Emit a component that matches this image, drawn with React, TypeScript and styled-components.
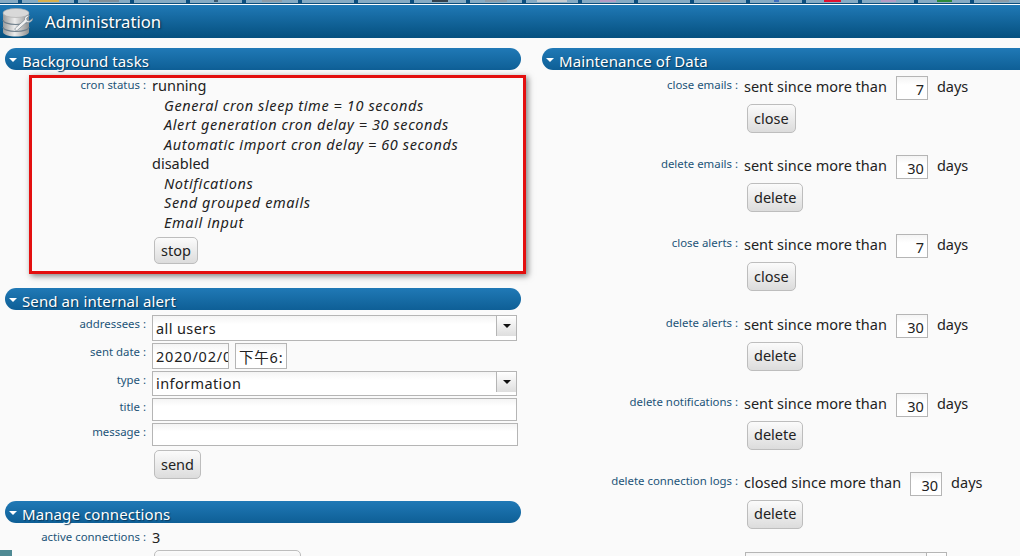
import React, { FunctionComponent, ReactNode } from 'react'
import styled, { createGlobalStyle } from 'styled-components'

const UI_FONT = '"Noto Sans", "Noto Sans CJK TC", sans-serif'

const TAB_TIPS: Array<{ color?: string; width?: number }> = [
  {},
  { color: '#d9b04e', width: 21 },
  { color: '#7f8f9b', width: 30 },
  {},
  { color: '#3c5a70', width: 4 },
  { color: '#8d9ca8', width: 20 },
  {},
  {},
  { color: '#33414d', width: 16 },
  { color: '#8d9ca8', width: 22 },
  { color: '#c5cbd0', width: 30 },
  { color: '#b49bc4', width: 16 },
  {},
  { color: '#9a9a9a', width: 20 },
  { color: '#3f6fc0', width: 5 },
  { color: '#e0102f', width: 17 },
  { color: '#b49bc4', width: 15 },
  { color: '#2d8a3a', width: 15 },
  { color: '#8d9ca8', width: 18 }
]

const MAINTENANCE = [
  { label: 'close emails', prefix: 'sent since more than', days: 7, action: 'close' },
  { label: 'delete emails', prefix: 'sent since more than', days: 30, action: 'delete' },
  { label: 'close alerts', prefix: 'sent since more than', days: 7, action: 'close' },
  { label: 'delete alerts', prefix: 'sent since more than', days: 30, action: 'delete' },
  { label: 'delete notifications', prefix: 'sent since more than', days: 30, action: 'delete' },
  { label: 'delete connection logs', prefix: 'closed since more than', days: 30, action: 'delete' }
]

const Section: FunctionComponent<{ title: string; children: ReactNode }> = ({ title, children }) => {
  return (
    <section>
      <SectionHeader>
        <Caret />
        <SectionTitle>{title}</SectionTitle>
      </SectionHeader>
      {children}
    </section>
  )
}

const DatabaseIcon: FunctionComponent = () => (
  <svg width="32" height="29" viewBox="0 0 32 29">
    <defs>
      <linearGradient id="dbBody" x1="0" x2="1" y1="0" y2="0">
        <stop offset="0" stopColor="#9b9b9b" />
        <stop offset="0.45" stopColor="#ececec" />
        <stop offset="1" stopColor="#8f8f8f" />
      </linearGradient>
    </defs>
    <path d="M1 5v19c0 2.500 5.500 4.500 13 4.500s13-2 13-4.500V5z" fill="url(#dbBody)" />
    <ellipse cx="14" cy="5" rx="13" ry="4.500" fill="#d9d9d9" stroke="#a8a8a8" strokeWidth="0.6" />
    <path d="M1 12c0 2.500 5.500 4.500 13 4.500S27 14.500 27 12" fill="none" stroke="#6f7f8c" strokeWidth="1.2" />
    <path d="M1 19c0 2.500 5.500 4.500 13 4.500S27 21.500 27 19" fill="none" stroke="#6f7f8c" strokeWidth="1.2" />
    <path
      d="M30.500 10.500l-3 2.600-2.300-.6-.6-2.200 2.900-2.600c-2.600-.8-5.500 1.200-5 4.300L13.500 20c-1.500 1.300.4 3.600 2 2.200l9-8c2.800 1 6.300-1 6-3.700z"
      fill="#f2f2f2"
      stroke="#7d8a94"
      strokeWidth="0.7"
    />
  </svg>
)

const ComboBox: FunctionComponent<{ value?: string; width?: number; height: number }> = ({ value, width, height }) => (
  <Combo $width={width} $height={height}>
    <ComboText $height={height}>{value}</ComboText>
    <ComboArrow>
      <ArrowGlyph />
    </ComboArrow>
  </Combo>
)

export default function App() {
  return (
    <Page>
      <GlobalStyle />
      <TabStrip>
        {TAB_TIPS.map((tip, index) => (
          <Tab key={index}>{tip.color && <TabTip $color={tip.color} $width={tip.width} />}</Tab>
        ))}
      </TabStrip>
      <TitleBar>
        <DatabaseIcon />
        <PageTitle>Administration</PageTitle>
      </TitleBar>
      <Columns>
        <LeftColumn>
          <Section title="Background tasks">
            <CronBody>
              <FormRow>
                <FieldLabel>cron status :</FieldLabel>
                <div>
                  <TextLine>running</TextLine>
                  <Detail>General cron sleep time = 10 seconds</Detail>
                  <Detail>Alert generation cron delay = 30 seconds</Detail>
                  <Detail>Automatic import cron delay = 60 seconds</Detail>
                  <TextLine>disabled</TextLine>
                  <Detail>Notifications</Detail>
                  <Detail>Send grouped emails</Detail>
                  <Detail>Email input</Detail>
                  <Button $height={27} $top={5} $left={2}>
                    stop
                  </Button>
                </div>
              </FormRow>
            </CronBody>
          </Section>

          <Section title="Send an internal alert">
            <AlertBody>
              <FormRow>
                <FieldLabel>addressees :</FieldLabel>
                <ComboBox value="all users" width={365} height={26} />
              </FormRow>
              <FormRow>
                <FieldLabel>sent date :</FieldLabel>
                <DateFields>
                  <DateInput $width={77} readOnly value="2020/02/06" />
                  <DateInput $width={52} readOnly value="下午6:" />
                </DateFields>
              </FormRow>
              <FormRow>
                <FieldLabel>type :</FieldLabel>
                <ComboBox value="information" width={365} height={25} />
              </FormRow>
              <FormRow>
                <FieldLabel>title :</FieldLabel>
                <TextBox $width={365} $height={23} />
              </FormRow>
              <FormRow>
                <FieldLabel>message :</FieldLabel>
                <TextBox $width={366} $height={23} />
              </FormRow>
              <FormRow>
                <span />
                <Button $height={29} $top={2} $left={2}>
                  send
                </Button>
              </FormRow>
            </AlertBody>
          </Section>

          <Section title="Manage connections">
            <ConnectionsBody>
              <FormRow>
                <FieldLabel>active connections :</FieldLabel>
                <TextLine>3</TextLine>
              </FormRow>
              <FormRow>
                <span />
                <WideButton />
              </FormRow>
            </ConnectionsBody>
          </Section>
        </LeftColumn>

        <RightColumn>
          <Section title="Maintenance of Data">
            <MaintenanceBody>
              {MAINTENANCE.map(row => (
                <MaintenanceRow key={row.label}>
                  <FieldLabel>{row.label} :</FieldLabel>
                  <div>
                    <DaysLine>
                      <TextLine>{row.prefix}</TextLine>
                      <DaysInput>{row.days}</DaysInput>
                      <TextLine>days</TextLine>
                    </DaysLine>
                    <Button $height={29} $top={4} $left={3}>
                      {row.action}
                    </Button>
                  </div>
                </MaintenanceRow>
              ))}
              <LastRow>
                <span />
                <ComboBox width={202} height={25} />
              </LastRow>
            </MaintenanceBody>
          </Section>
        </RightColumn>
      </Columns>
      <HighlightFrame />
      <CornerTab />
    </Page>
  )
}

const GlobalStyle = createGlobalStyle`
  html, body {
    margin: 0;
    padding: 0;
    background: #fafafa;
  }
`

const Page = styled.div`
  position: relative;
  width: 1020px;
  height: 556px;
  overflow: hidden;
  background: #fafafa;
  font-family: ${UI_FONT};
  font-size: 14.5px;
  color: #222;
`

const TabStrip = styled.div`
  display: flex;
  gap: 4px;
  height: 3px;
  margin-left: -34px;
  background: #0d4f7f;
  border-bottom: 1px solid #0d4f7f;
  box-shadow: 0 1px 0 #fff;
  margin-bottom: 1px;
`

const Tab = styled.div`
  flex: 0 0 52px;
  display: flex;
  justify-content: center;
  background: #86abc4;
`

const TabTip = styled.div<{ $color: string; $width?: number }>`
  width: ${(props): number => props.$width ?? 0}px;
  height: 2px;
  background: ${(props): string => props.$color};
`

const TitleBar = styled.header`
  display: flex;
  align-items: center;
  gap: 11px;
  height: 33px;
  padding-left: 2px;
  background: linear-gradient(#2079b6, #05507f);

  svg {
    flex: none;
    align-self: flex-start;
    margin-top: 3px;
  }
`

const PageTitle = styled.h1`
  margin: 0;
  font-size: 16.7px;
  font-weight: 400;
  color: #fff;
  text-shadow: 1px 1px 2px #0a2a40;
`

const Columns = styled.div`
  display: flex;
  gap: 21px;
  padding: 10px 0 0 5px;
`

const LeftColumn = styled.div`
  flex: 0 0 516px;
`

const RightColumn = styled.div`
  flex: 0 0 500px;
`

const SectionHeader = styled.div`
  display: flex;
  align-items: flex-end;
  height: 22px;
  border-radius: 11px;
  background: linear-gradient(#2079b6, #0e5f96);
`

const Caret = styled.span`
  width: 0;
  height: 0;
  margin: 0 5px 8px 4px;
  border-left: 4px solid transparent;
  border-right: 4px solid transparent;
  border-top: 4px solid #fff;
`

const SectionTitle = styled.h2`
  margin: 0;
  height: 18px;
  font-size: 15px;
  font-weight: 400;
  line-height: 18px;
  letter-spacing: 0.1px;
  color: #fff;
  text-shadow: 1px 1px 1px #0a3a5c;
`

const FormRow = styled.div`
  display: grid;
  grid-template-columns: 141px 1fr;
  column-gap: 6px;
  justify-items: start;
`

const MaintenanceRow = styled.div`
  display: grid;
  grid-template-columns: 196px 1fr;
  column-gap: 6px;
  justify-items: start;
`

const LastRow = styled(MaintenanceRow)`
  padding: 1px 0 0 1px;
`

const FieldLabel = styled.label`
  justify-self: end;
  font-size: 11.4px;
  line-height: 17px;
  text-align: right;
  white-space: nowrap;
  color: #1c5478;
`

const TextLine = styled.div`
  line-height: 19.5px;
  white-space: nowrap;
`

const Detail = styled(TextLine)`
  padding-left: 12px;
  font-style: italic;
  letter-spacing: 0.6px;
`

const CronBody = styled.div`
  padding: 6px 0 24px;
`

const AlertBody = styled.div`
  display: flex;
  flex-direction: column;
  gap: 2px;
  padding: 5px 0 22px;
`

const ConnectionsBody = styled.div`
  padding: 5px 0 0;
`

const MaintenanceBody = styled.div`
  display: flex;
  flex-direction: column;
  gap: 22.2px;
  padding-top: 6px;
`

const Button = styled.button<{ $height: number; $top: number; $left: number }>`
  display: block;
  height: ${(props): number => props.$height}px;
  margin: ${(props): number => props.$top}px 0 0 ${(props): number => props.$left}px;
  padding: 0 6px 2px;
  font: inherit;
  color: #222;
  background: linear-gradient(#fbfbfb, #dcdcdc);
  border: 1px solid #bdbdbd;
  border-radius: 5px;
`

const WideButton = styled(Button).attrs({ $height: 29, $top: 2, $left: 2 })`
  width: 147px;
`

const Combo = styled.div<{ $width?: number; $height: number }>`
  display: flex;
  box-sizing: border-box;
  width: ${(props): number => props.$width ?? 0}px;
  height: ${(props): number => props.$height}px;
  background: linear-gradient(#f4f4f4, #fff 35%);
  border: 1px solid #b5b5b5;
`

const ComboText = styled.div<{ $height: number }>`
  flex: 1;
  padding-left: 3px;
  line-height: ${(props): number => props.$height - 2}px;
  letter-spacing: 0.4px;
`

const ComboArrow = styled.div`
  display: flex;
  flex: 0 0 19px;
  align-items: center;
  justify-content: center;
  height: 20px;
  background: linear-gradient(#fff, #dedede);
  border-left: 1px solid #b5b5b5;
`

const ArrowGlyph = styled.span`
  width: 0;
  height: 0;
  border-left: 4px solid transparent;
  border-right: 4px solid transparent;
  border-top: 4px solid #111;
`

const DateFields = styled.div`
  display: flex;
  gap: 6px;
`

const DateInput = styled.input<{ $width: number }>`
  box-sizing: border-box;
  width: ${(props): number => props.$width}px;
  height: 26px;
  padding: 0 0 0 3px;
  font: inherit;
  letter-spacing: 0.8px;
  color: #222;
  background: linear-gradient(#f4f4f4, #fff 35%);
  border: 1px solid #b5b5b5;
  border-radius: 0;
  outline: none;
`

const TextBox = styled.div<{ $width: number; $height: number }>`
  box-sizing: border-box;
  width: ${(props): number => props.$width}px;
  height: ${(props): number => props.$height}px;
  background: linear-gradient(#f4f4f4, #fff 35%);
  border: 1px solid #b5b5b5;
`

const DaysLine = styled.div`
  display: flex;
  align-items: flex-start;
  gap: 9px;
  height: 24px;

  ${TextLine} {
    padding-top: 1px;
  }
`

const DaysInput = styled.div`
  box-sizing: border-box;
  width: 32px;
  height: 24px;
  padding-right: 3px;
  line-height: 25px;
  text-align: right;
  background: linear-gradient(#f4f4f4, #fff 35%);
  border: 1px solid #b5b5b5;
`

// Red frame drawn over the screenshot, it belongs to no panel
const HighlightFrame = styled.div`
  position: absolute;
  top: 75px;
  left: 29px;
  box-sizing: border-box;
  width: 497px;
  height: 199px;
  border: 3px solid #e30f0f;
  box-shadow: 2px 2px 6px rgba(0, 0, 0, 0.5);
`

const CornerTab = styled.div`
  position: absolute;
  bottom: 0;
  left: 0;
  width: 12px;
  height: 6px;
  background: #4f8a94;
`
